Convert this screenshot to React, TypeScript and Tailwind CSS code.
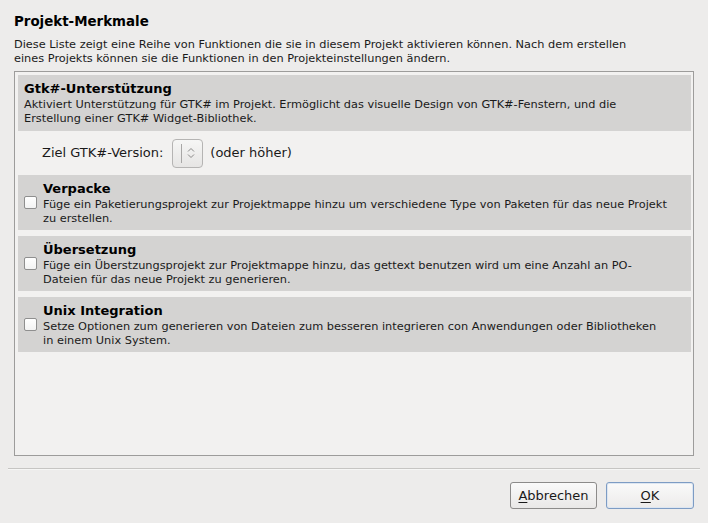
import React from "react";

const font = { fontFamily: '"DejaVu Sans", "Liberation Sans", sans-serif' };

function Check() {
  return (
    <div className="w-[13px] h-[13px] shrink-0 rounded-[2px] border border-[#8f8f8f] bg-gradient-to-b from-white to-[#f3f3f3]" />
  );
}

function Section({ title, lines, check }: { title: string; lines: string[]; check?: boolean }) {
  return (
    <div className={`bg-[#d4d3d2] flex items-center pl-[6px] ${check ? "h-[55px]" : "h-[56px]"}`}>
      {check && (
        <div className="mr-[6px]">
          <Check />
        </div>
      )}
      <div>
        <div className="text-[13px] leading-[16px] font-bold text-black whitespace-nowrap">{title}</div>
        {lines.map((l, i) => (
          <div key={i} className="text-[11.33px] leading-[14px] text-[#1a1a1a] whitespace-nowrap">
            {l}
          </div>
        ))}
      </div>
    </div>
  );
}

export default function App() {
  return (
    <div style={font} className="w-[708px] h-[523px] bg-[#edeceb] flex flex-col overflow-hidden">
      <div className="px-[14px] pt-[14px]">
        <div className="text-[13.4px] leading-[16px] font-bold text-black">Projekt-Merkmale</div>
        <div className="mt-[7px] text-[11.33px] leading-[14px] text-[#1a1a1a] whitespace-nowrap">
          <div>Diese Liste zeigt eine Reihe von Funktionen die sie in diesem Projekt aktivieren können. Nach dem erstellen</div>
          <div>eines Projekts können sie die Funktionen in den Projekteinstellungen ändern.</div>
        </div>
      </div>
      <div className="mx-[14px] mt-[6px] w-[680px] h-[385px] border border-[#9d9c9b] bg-[#f2f1f0] pt-[3px] pl-[3px] pr-[2px]">
        <Section
          title="Gtk#-Unterstützung"
          lines={[
            "Aktiviert Unterstützung für GTK# im Projekt. Ermöglicht das visuelle Design von GTK#-Fenstern, und die",
            "Erstellung einer GTK# Widget-Bibliothek.",
          ]}
        />
        <div className="h-[44px] flex items-center pl-[24px] text-[13px] text-[#1a1a1a]">
          <span>Ziel GTK#-Version:</span>
          <div className="ml-[9px] w-[31px] h-[29px] rounded-[4px] border border-[#b5b4b3] bg-gradient-to-b from-[#f6f6f5] to-[#e6e5e4] flex items-center">
            <div className="ml-[8px] w-px h-[19px] bg-[#a8a7a6]" />
            <svg width="10" height="14" viewBox="0 0 10 14" className="ml-[4px]">
              <path d="M2 5.5 L5 2.5 L8 5.5" fill="none" stroke="#8a8988" strokeWidth="1" />
              <path d="M2 8.5 L5 11.5 L8 8.5" fill="none" stroke="#8a8988" strokeWidth="1" />
            </svg>
          </div>
          <span className="ml-[7px]">(oder höher)</span>
        </div>
        <div className="flex flex-col gap-[6px]">
          <Section
            check
            title="Verpacke"
            lines={[
              "Füge ein Paketierungsprojekt zur Projektmappe hinzu um verschiedene Type von Paketen für das neue Projekt",
              "zu erstellen.",
            ]}
          />
          <Section
            check
            title="Übersetzung"
            lines={[
              "Füge ein Überstzungsprojekt zur Projektmappe hinzu, das gettext benutzen wird um eine Anzahl an PO-",
              "Dateien für das neue Projekt zu generieren.",
            ]}
          />
          <Section
            check
            title="Unix Integration"
            lines={[
              "Setze Optionen zum generieren von Dateien zum besseren integrieren con Anwendungen oder Bibliotheken",
              "in einem Unix System.",
            ]}
          />
        </div>
      </div>
      <div className="mx-[8px] mt-[12px] border-t border-[#c6c5c3] border-b border-b-[#f6f6f5]" />
      <div className="flex justify-end gap-[9px] pr-[14px] mt-[12px]">
        <button className="w-[87px] h-[27px] rounded-[3px] border border-[#8c8b8a] bg-gradient-to-b from-[#fafafa] to-[#e9e8e7] text-[13px] text-[#1a1a1a]">
          <span className="underline underline-offset-2">A</span>bbrechen
        </button>
        <button className="w-[88px] h-[27px] rounded-[3px] border border-[#7d9cc4] bg-gradient-to-b from-[#fafafa] to-[#ecebea] text-[13px] text-[#1a1a1a] shadow-[inset_0_0_0_1px_#dde6f1]">
          <span className="underline underline-offset-2">O</span>K
        </button>
      </div>
    </div>
  );
}
